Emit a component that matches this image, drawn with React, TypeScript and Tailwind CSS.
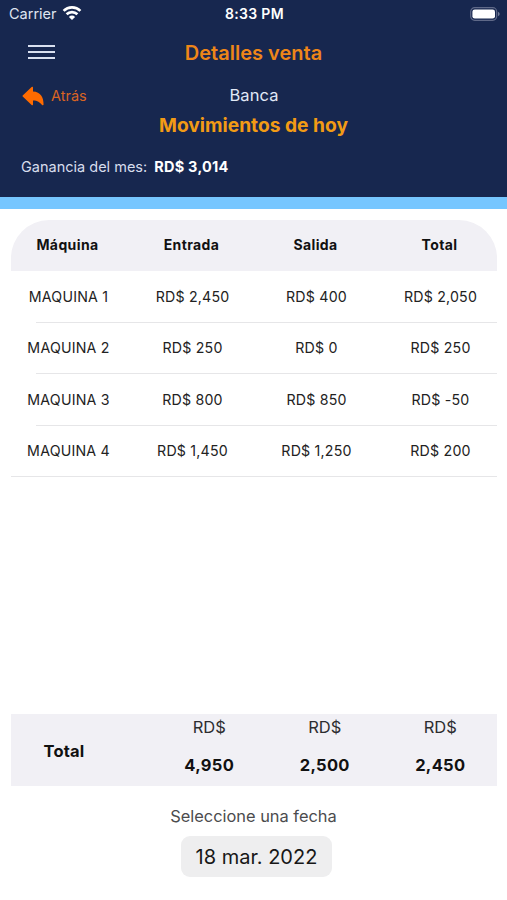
import { IoArrowUndo } from 'react-icons/io5'

const columns = ['Máquina', 'Entrada', 'Salida', 'Total']

const rows = [
  { name: 'MAQUINA 1', entrada: '2,450', salida: '400', total: '2,050' },
  { name: 'MAQUINA 2', entrada: '250', salida: '0', total: '250' },
  { name: 'MAQUINA 3', entrada: '800', salida: '850', total: '-50' },
  { name: 'MAQUINA 4', entrada: '1,450', salida: '1,250', total: '200' },
]

const totals = ['4,950', '2,500', '2,450']

function StatusBar() {
  return (
    <div className="grid h-[27px] grid-cols-3 items-center pl-[9px] pr-[7px] text-white">
      <div className="flex items-center gap-[5px] text-[14.5px] text-[#dfe4f0]">
        Carrier
        <svg width="20" height="15" viewBox="0 0 20 15" fill="none" stroke="#fff" strokeWidth="2.7">
          <path d="M1.6 4.9a12 12 0 0 1 16.8 0" />
          <path d="M4.6 8.3a7.7 7.7 0 0 1 10.8 0" />
          <path d="M10 14 6.9 10.9a4.4 4.4 0 0 1 6.2 0Z" fill="#fff" stroke="none" />
        </svg>
      </div>
      <span className="text-center text-[14px] font-semibold tracking-[0.3px]">8:33 PM</span>
      <svg className="justify-self-end" width="30" height="14" viewBox="0 0 30 14">
        <rect x="0.7" y="0.7" width="26" height="12.6" rx="4" fill="none" stroke="#5f6988" strokeWidth="1.2" />
        <rect x="2.4" y="2.4" width="22.6" height="9.2" rx="2.4" fill="#fff" />
        <path d="M28 4.8q1.7.7 1.7 2.2T28 9.2Z" fill="#737c98" />
      </svg>
    </div>
  )
}

function Header() {
  return (
    <header className="h-[209px] border-b-[12px] border-[#76c6ff] bg-[#17274f]">
      <StatusBar />
      <div className="grid h-[50px] grid-cols-[1fr_auto_1fr] items-center px-7">
        <button className="flex w-[27px] flex-col gap-1" aria-label="Menú">
          <span className="h-0.5 bg-[#d9e0f0]" />
          <span className="h-0.5 bg-[#d9e0f0]" />
          <span className="h-0.5 bg-[#d9e0f0]" />
        </button>
        <h1 className="pt-0.5 text-[20px] font-semibold text-[#ee8618]">Detalles venta</h1>
      </div>
      <div className="grid h-[37px] grid-cols-[1fr_auto_1fr] items-center px-5">
        <button className="flex items-center gap-[5px] text-[14.5px] text-[#d96423]">
          <IoArrowUndo className="size-[26px] text-[#ff6b00]" />
          Atrás
        </button>
        <span className="pl-px text-[16.5px] tracking-[0.1px] text-[#e1e9f7]">Banca</span>
      </div>
      <h2 className="text-center text-[19.2px] font-bold leading-[22px] text-[#f29b15]">Movimientos de hoy</h2>
      <p className="mt-[21px] flex gap-[7px] pl-[21px] text-[14.5px] leading-5 text-[#d7dded]">
        Ganancia del mes:
        <strong className="font-bold tracking-[0.25px] text-white">RD$ 3,014</strong>
      </p>
    </header>
  )
}

function MovementsTable() {
  return (
    <section className="mx-auto mt-[11px] w-[486px] text-[14.2px] tracking-[0.2px] text-[#222]">
      <div className="h-[51px] rounded-t-[38px] bg-[#f1f0f5]">
        <div className="-mx-[5px] grid h-[49px] grid-cols-4 items-center text-center text-[14px] font-bold tracking-[0.4px] text-[#111]">
          {columns.map((column) => (
            <span key={column}>{column}</span>
          ))}
        </div>
      </div>
      {rows.map((row) => (
        <div key={row.name} className="group">
          <div className="-ml-[4px] -mr-[6px] grid h-[50.6px] grid-cols-4 items-center text-center">
            <span>{row.name}</span>
            <span>RD$ {row.entrada}</span>
            <span>RD$ {row.salida}</span>
            <span>RD$ {row.total}</span>
          </div>
          <div className="ml-[25px] h-px bg-[#e6e6e8] group-last:ml-0" />
        </div>
      ))}
    </section>
  )
}

export default function App() {
  return (
    <main className="flex h-[900px] w-[507px] flex-col overflow-hidden bg-white font-['Inter','Liberation_Sans',sans-serif]">
      <Header />
      <MovementsTable />
      <section className="mx-auto mt-auto grid h-[72px] w-[486px] grid-cols-[141px_repeat(3,115.5px)] bg-[#f1f0f5] text-center text-[16.5px] text-[#111]">
        <strong className="self-center pr-[34px] pt-0.5 font-bold tracking-[0.2px]">Total</strong>
        {totals.map((total) => (
          <div key={total} className="flex flex-col gap-[14px] pt-px leading-6">
            <span className="text-[#2d2d30]">RD$</span>
            <strong className="font-bold tracking-[0.3px]">{total}</strong>
          </div>
        ))}
      </section>
      <section className="flex h-[114px] flex-col items-center pt-[18px]">
        <label className="text-[16.4px] leading-6 text-[#4b4b4d]">Seleccione una fecha</label>
        <button className="ml-[6px] mt-2 h-[41px] w-[151px] rounded-[9px] bg-[#eeeeef] text-[20px] text-[#171717]">
          18 mar. 2022
        </button>
      </section>
    </main>
  )
}
